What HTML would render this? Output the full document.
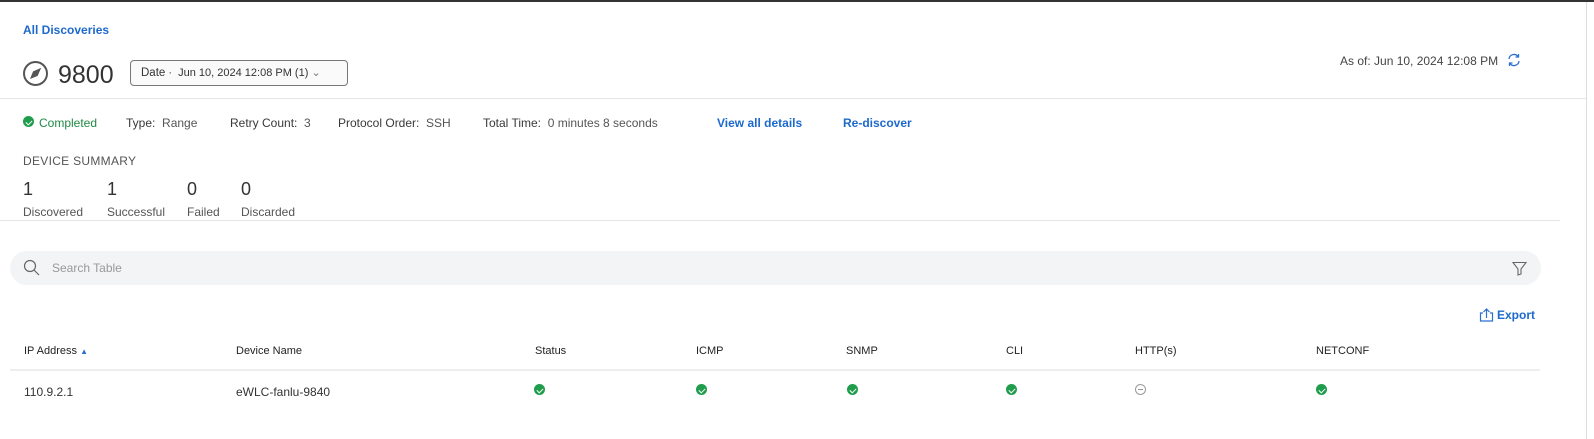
<!DOCTYPE html>
<html><head><meta charset="utf-8"><style>
*{margin:0;padding:0;box-sizing:border-box}
body{width:1594px;height:437px;overflow:hidden;background:#fff;font-family:"Liberation Sans",Arial,sans-serif;color:#39393b;position:relative;border-top:2px solid #333}
.a{position:absolute;white-space:nowrap}
.blue{color:#1d69cc}
.hr{position:absolute;height:1px;background:#e6e6e6}
.ck{display:inline-block;width:11px;height:11px;border-radius:50%;background:#1f9d4c;position:absolute}
.ck:after{content:"";position:absolute;left:3.5px;top:2.5px;width:3px;height:5px;border:solid #fff;border-width:0 1.3px 1.3px 0;transform:rotate(45deg)}
.th{font-size:11px;color:#222;top:343px}
.td{font-size:12px;color:#333;top:383px}
</style></head><body>
<div class="a blue" style="left:23px;top:21px;font-size:12px;font-weight:bold">All Discoveries</div>
<svg class="a" style="left:22px;top:58px" width="27" height="27" viewBox="0 0 27 27"><circle cx="13.5" cy="13.5" r="11.5" fill="none" stroke="#555" stroke-width="2"/><path d="M19 8 L15.5 16 L8 19 L11 11.5 Z" fill="#555"/><path d="M19 8 L11 11.5 L15.5 16 Z" fill="#555"/></svg>
<div class="a" style="left:58px;top:59px;font-size:25px;color:#333">9800</div>
<div class="a" style="left:130px;top:58px;width:218px;height:26px;border:1px solid #777;border-radius:4px;background:#fafafa;font-size:11px;line-height:24px;padding-left:10px;color:#333"><b style="font-weight:normal;font-size:11.5px">Date</b> &middot;&nbsp; Jun 10, 2024 12:08 PM (1) <span style="color:#777">&#8964;</span></div>
<div class="a" style="left:1340px;top:52px;font-size:12px;color:#444">As of: Jun 10, 2024 12:08 PM</div>
<svg class="a" style="left:1506px;top:50px" width="16" height="16" viewBox="0 0 16 16" fill="none" stroke="#2b6fd0" stroke-width="1.3"><path d="M3 7a5 5 0 0 1 9-2.5M13 9a5 5 0 0 1-9 2.5"/><path d="M12.5 2v3h-3M3.5 14v-3h3"/></svg>
<div class="hr" style="left:0;top:96px;width:1586px"></div>
<div class="a" style="left:1586px;top:0;width:1px;height:437px;background:#ddd"></div>
<span class="ck" style="left:23px;top:114px"></span>
<div class="a" style="left:39px;top:114px;font-size:12px;color:#1f8a42">Completed</div>
<div class="a" style="left:126px;top:114px;font-size:12px">Type:&nbsp; <span style="color:#555">Range</span></div>
<div class="a" style="left:230px;top:114px;font-size:12px">Retry Count:&nbsp; <span style="color:#555">3</span></div>
<div class="a" style="left:338px;top:114px;font-size:12px">Protocol Order:&nbsp; <span style="color:#555">SSH</span></div>
<div class="a" style="left:483px;top:114px;font-size:12px">Total Time:&nbsp; <span style="color:#555">0 minutes 8 seconds</span></div>
<div class="a blue" style="left:717px;top:114px;font-size:12px;font-weight:bold">View all details</div>
<div class="a blue" style="left:843px;top:114px;font-size:12px;font-weight:bold">Re-discover</div>
<div class="a" style="left:23px;top:152px;font-size:12px;color:#555;letter-spacing:0.3px">DEVICE SUMMARY</div>
<div class="a" style="left:23px;top:177px;font-size:18px;color:#333">1</div>
<div class="a" style="left:107px;top:177px;font-size:18px;color:#333">1</div>
<div class="a" style="left:187px;top:177px;font-size:18px;color:#333">0</div>
<div class="a" style="left:241px;top:177px;font-size:18px;color:#333">0</div>
<div class="a" style="left:23px;top:203px;font-size:12px;color:#555">Discovered</div>
<div class="a" style="left:107px;top:203px;font-size:12px;color:#555">Successful</div>
<div class="a" style="left:187px;top:203px;font-size:12px;color:#555">Failed</div>
<div class="a" style="left:241px;top:203px;font-size:12px;color:#555">Discarded</div>
<div class="hr" style="left:0;top:218px;width:1560px"></div>
<div class="a" style="left:10px;top:249px;width:1531px;height:34px;border-radius:17px;background:#f3f4f6"></div>
<svg class="a" style="left:23px;top:257px" width="17" height="17" viewBox="0 0 17 17" fill="none" stroke="#666" stroke-width="1.2"><circle cx="7" cy="7" r="5.5"/><path d="M11 11l5 5"/></svg>
<div class="a" style="left:52px;top:259px;font-size:12px;color:#999">Search Table</div>
<svg class="a" style="left:1512px;top:259px" width="15" height="15" viewBox="0 0 15 15" fill="none" stroke="#666" stroke-width="1.1"><path d="M1 1.5h13L9 8v5l-3 1V8Z"/></svg>
<svg class="a" style="left:1479px;top:306px" width="15" height="14" viewBox="0 0 15 14" fill="none" stroke="#2b6fd0" stroke-width="1.2"><path d="M4 5H1.5v8h12V5H11M7.5 10V1M4.5 4l3-3 3 3"/></svg>
<div class="a blue" style="left:1497px;top:306px;font-size:12px;font-weight:bold">Export</div>
<div class="a th" style="left:24px">IP Address <span style="color:#2b6fd0;font-size:8px">&#9650;</span></div>
<div class="a th" style="left:236px">Device Name</div>
<div class="a th" style="left:535px">Status</div>
<div class="a th" style="left:696px">ICMP</div>
<div class="a th" style="left:846px">SNMP</div>
<div class="a th" style="left:1006px">CLI</div>
<div class="a th" style="left:1135px">HTTP(s)</div>
<div class="a th" style="left:1316px">NETCONF</div>
<div class="a" style="left:10px;top:367px;width:1530px;height:2px;background:#eceef0"></div>
<div class="a td" style="left:24px">110.9.2.1</div>
<div class="a td" style="left:236px">eWLC-fanlu-9840</div>
<span class="ck" style="left:534px;top:382px"></span>
<span class="ck" style="left:696px;top:382px"></span>
<span class="ck" style="left:847px;top:382px"></span>
<span class="ck" style="left:1006px;top:382px"></span>
<span class="a" style="left:1135px;top:382px;width:11px;height:11px;border:1px solid #999;border-radius:50%"><span style="position:absolute;left:2px;top:4px;width:5px;height:1px;background:#999"></span></span>
<span class="ck" style="left:1316px;top:382px"></span>
</body></html>
